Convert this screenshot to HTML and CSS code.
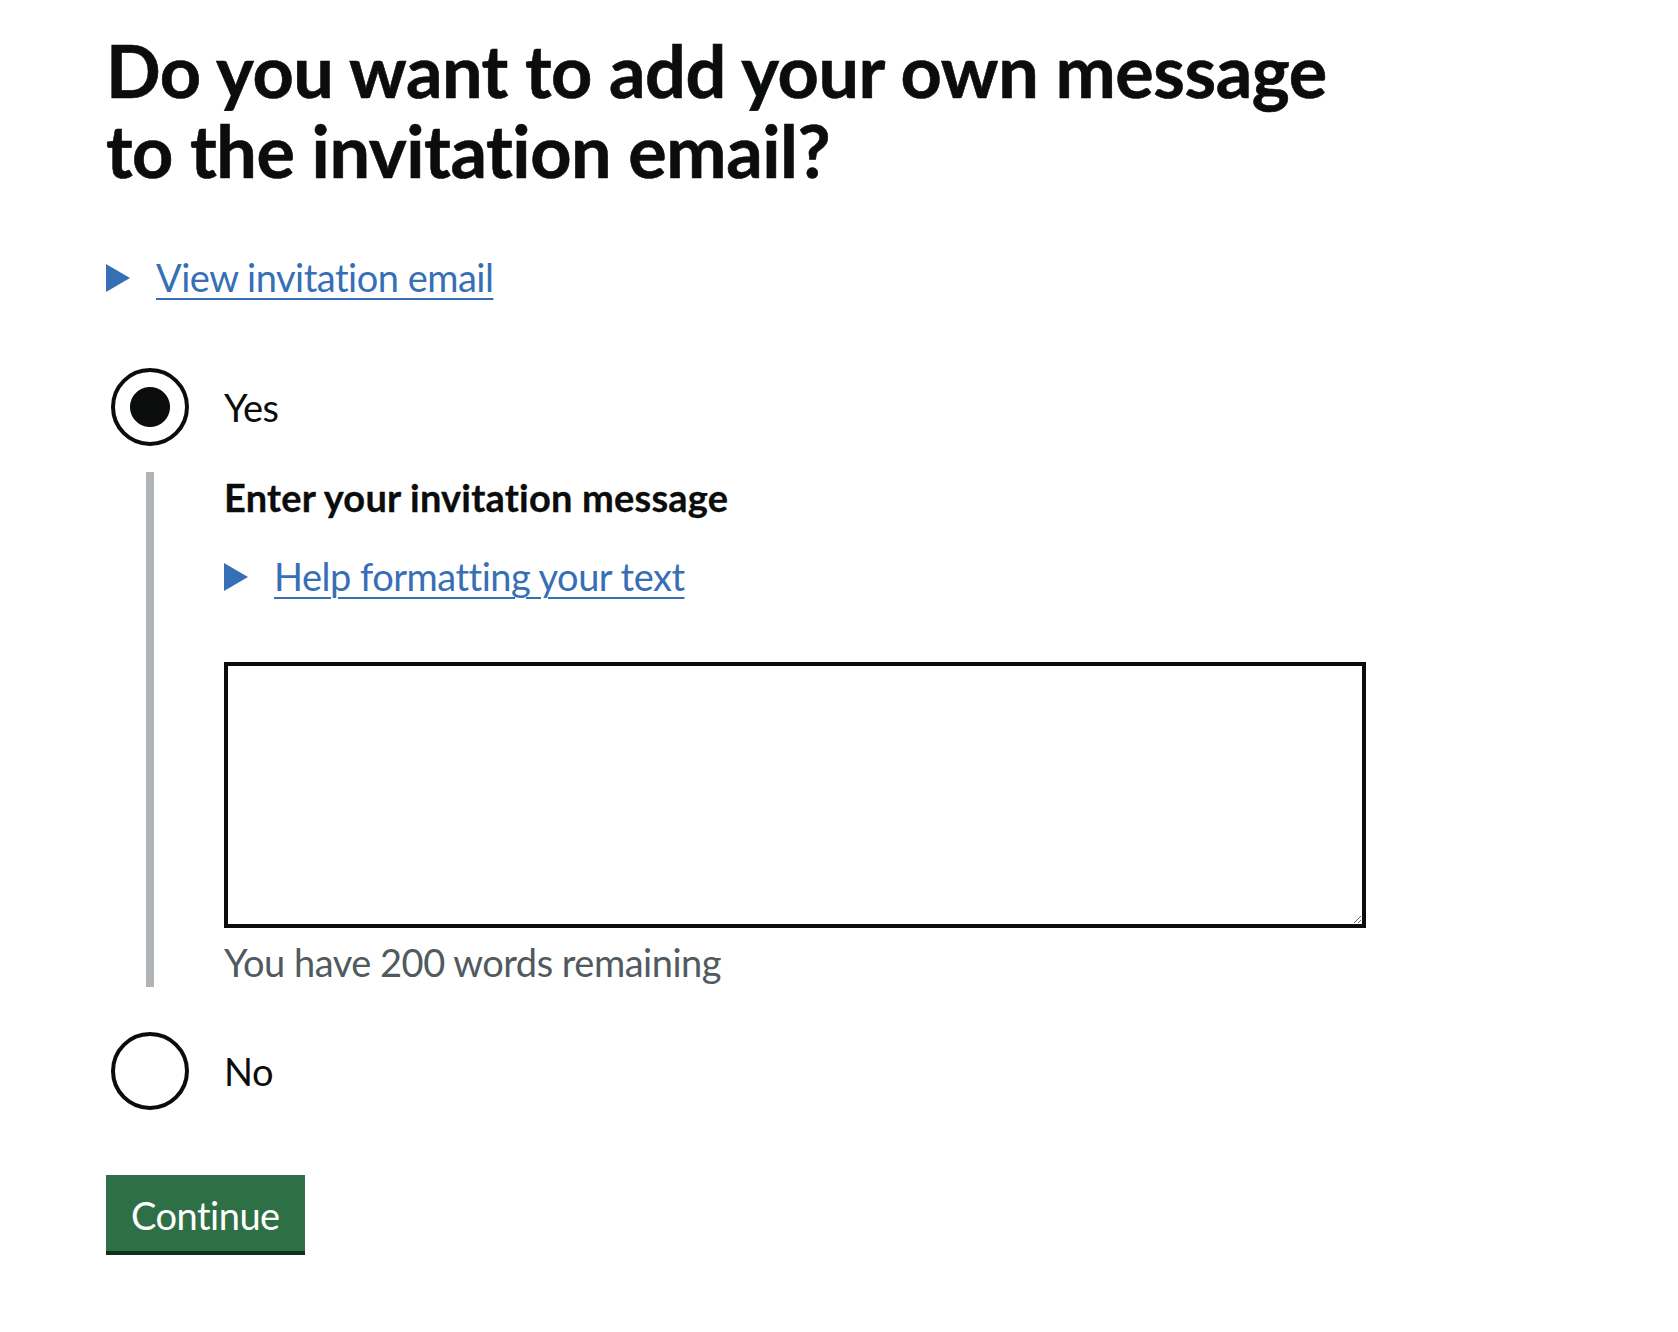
FILE: index.html
```html
<!DOCTYPE html>
<html lang="en">
<head>
<meta charset="utf-8">
<title>Do you want to add your own message to the invitation email?</title>
<link rel="stylesheet" href="styles.css">
</head>
<body>
<main class="page">
  <h1 class="heading">Do you want to add your own message<br>to the invitation email?</h1>

  <details class="details details-top">
    <summary class="summary"><span class="arrow"></span><span class="summary-text">View invitation email</span></summary>
  </details>

  <div class="radios">
    <div class="radio-item">
      <input class="radio-input" type="radio" name="message" id="yes" checked>
      <label class="radio-label" for="yes">Yes</label>
    </div>

    <div class="conditional">
      <label class="label-bold" for="msg">Enter your invitation message</label>
      <details class="details details-help">
        <summary class="summary"><span class="arrow"></span><span class="summary-text">Help formatting your text</span></summary>
      </details>
      <textarea class="textarea" id="msg"></textarea>
      <div class="hint">You have 200 words remaining</div>
    </div>

    <div class="radio-item radio-no">
      <input class="radio-input" type="radio" name="message" id="no">
      <label class="radio-label" for="no">No</label>
    </div>
  </div>

  <button class="button" type="button">Continue</button>
</main>
</body>
</html>
```

FILE: styles.css
```css
html, body {
  margin: 0;
  padding: 0;
  background: #ffffff;
}

body {
  font-family: Lato, "Liberation Sans", Arial, sans-serif;
  font-variant-ligatures: none;
  color: #0b0c0c;
  letter-spacing: -0.5px;
}

.page {
  padding: 30px 0 0 106px;
}

.heading {
  margin: 0;
  font-size: 72px;
  line-height: 80px;
  font-weight: 700;
  letter-spacing: -0.45px;
  -webkit-text-stroke: 0.6px #0b0c0c;
}

.details {
  margin: 0;
}

.details-top {
  margin-top: 62px;
}

.summary {
  display: flex;
  align-items: flex-start;
  list-style: none;
  cursor: pointer;
  font-size: 38px;
  line-height: 50px;
  color: #376fb6;
}

.summary::-webkit-details-marker {
  display: none;
}

.arrow {
  display: block;
  width: 0;
  height: 0;
  margin-top: 12px;
  border-style: solid;
  border-width: 14px 0 14px 24px;
  border-color: transparent transparent transparent #376fb6;
  flex: none;
}

.summary-text {
  margin-left: 26px;
  text-decoration: underline;
  text-decoration-thickness: 2px;
  text-underline-offset: 6px;
}

.radios {
  margin-top: 66px;
}

.radio-item {
  display: flex;
  align-items: center;
  min-height: 78px;
}

.radio-input {
  -webkit-appearance: none;
  appearance: none;
  margin: 0 0 0 5px;
  width: 78px;
  height: 78px;
  box-sizing: border-box;
  border: 4px solid #0b0c0c;
  border-radius: 50%;
  background: #ffffff;
  flex: none;
}

.radio-input:checked {
  background: radial-gradient(circle, #0b0c0c 0, #0b0c0c 19.5px, #ffffff 20.5px);
}

.radio-label {
  margin-left: 35px;
  font-size: 38px;
  line-height: 50px;
}

.conditional {
  margin: 26px 0 0 40px;
  border-left: 8px solid #b1b4b6;
  padding-left: 70px;
}

.label-bold {
  display: block;
  font-size: 38px;
  line-height: 50px;
  font-weight: 700;
  letter-spacing: 0.2px;
  -webkit-text-stroke: 0.3px #0b0c0c;
}

.details-help {
  margin-top: 29px;
}

.textarea {
  display: block;
  box-sizing: border-box;
  margin-top: 61px;
  width: 1142px;
  height: 266px;
  border: 4px solid #0b0c0c;
  border-radius: 0;
  padding: 10px;
  font-family: inherit;
  font-size: 38px;
}

.hint {
  margin-top: 9px;
  font-size: 38px;
  line-height: 50px;
  color: #505a5f;
}

.radio-no {
  margin-top: 45px;
}

.button {
  display: block;
  margin-top: 65px;
  box-sizing: border-box;
  height: 80px;
  padding: 21px 25px 17px;
  border: 0;
  border-bottom: 4px solid #10301d;
  border-radius: 0;
  background: #2e7045;
  color: #ffffff;
  font-family: inherit;
  font-size: 38px;
  line-height: 38px;
  letter-spacing: -0.5px;
}
```
